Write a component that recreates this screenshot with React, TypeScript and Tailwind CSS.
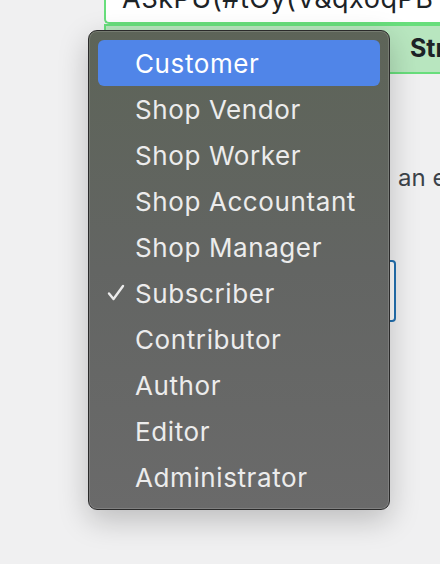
const roles = [
  'Customer',
  'Shop Vendor',
  'Shop Worker',
  'Shop Accountant',
  'Shop Manager',
  'Subscriber',
  'Contributor',
  'Author',
  'Editor',
  'Administrator',
]

export default function App() {
  const selected = 'Subscriber'
  const highlighted = 'Customer'

  return (
    <div
      className="relative h-[564px] w-[440px] overflow-hidden bg-[#f0f0f1]"
      style={{ fontFamily: 'Inter, "Noto Sans", sans-serif' }}
    >
      {/* password field + strength meter behind the menu */}
      <div className="ml-[104px] flex flex-col">
        <div className="h-[24px] overflow-hidden rounded-bl-[5px] border-b-2 border-l-2 border-[#68de7c] bg-white">
          <div className="-mt-[17px] pl-[16px] text-[27px] leading-[32px] tracking-[0.5px] whitespace-nowrap text-[#1d2327]">
            A3kPU(#tOy(V&amp;qxoqPB
          </div>
        </div>
        <div className="flex h-[50px] items-center border-y-2 border-l-2 border-[#68de7c] bg-[#b8e6bf] pl-[304px] text-[25px] font-bold text-[#1d2327]">
          Strong
        </div>
      </div>

      <div className="absolute top-[160px] left-[398px] text-[24px] whitespace-nowrap text-[#3c434a]">
        an email
      </div>

      <div className="absolute top-[260px] left-[300px] h-[62px] w-[96px] rounded-[4px] border-2 border-[#2271b1] bg-white" />

      {/* popup menu */}
      <div className="absolute top-[30px] left-[88px] w-[302px] rounded-[9px] border border-[#2a2a2a] bg-gradient-to-b from-[#5d6458] via-[#636563] to-[#6a6a6a] p-[9px] shadow-[0_10px_30px_rgba(0,0,0,0.22)] ring-1 ring-inset ring-white/15">
        {roles.map((role) => (
          <div
            key={role}
            className={
              'relative flex h-[46px] items-center rounded-[6px] pl-[37px] text-[26px] tracking-[0.6px] ' +
              (role === highlighted ? 'bg-[#5085e8] text-white' : 'text-[#ececec]')
            }
          >
            {role === selected && (
              <svg
                className="absolute top-[14px] left-[9px]"
                width="18"
                height="18"
                viewBox="0 0 18 18"
                fill="none"
              >
                <path
                  d="M2 9.5 L6.5 15 L16 2"
                  stroke="#ececec"
                  strokeWidth="2.4"
                  strokeLinecap="round"
                  strokeLinejoin="round"
                />
              </svg>
            )}
            {role}
          </div>
        ))}
      </div>
    </div>
  )
}
